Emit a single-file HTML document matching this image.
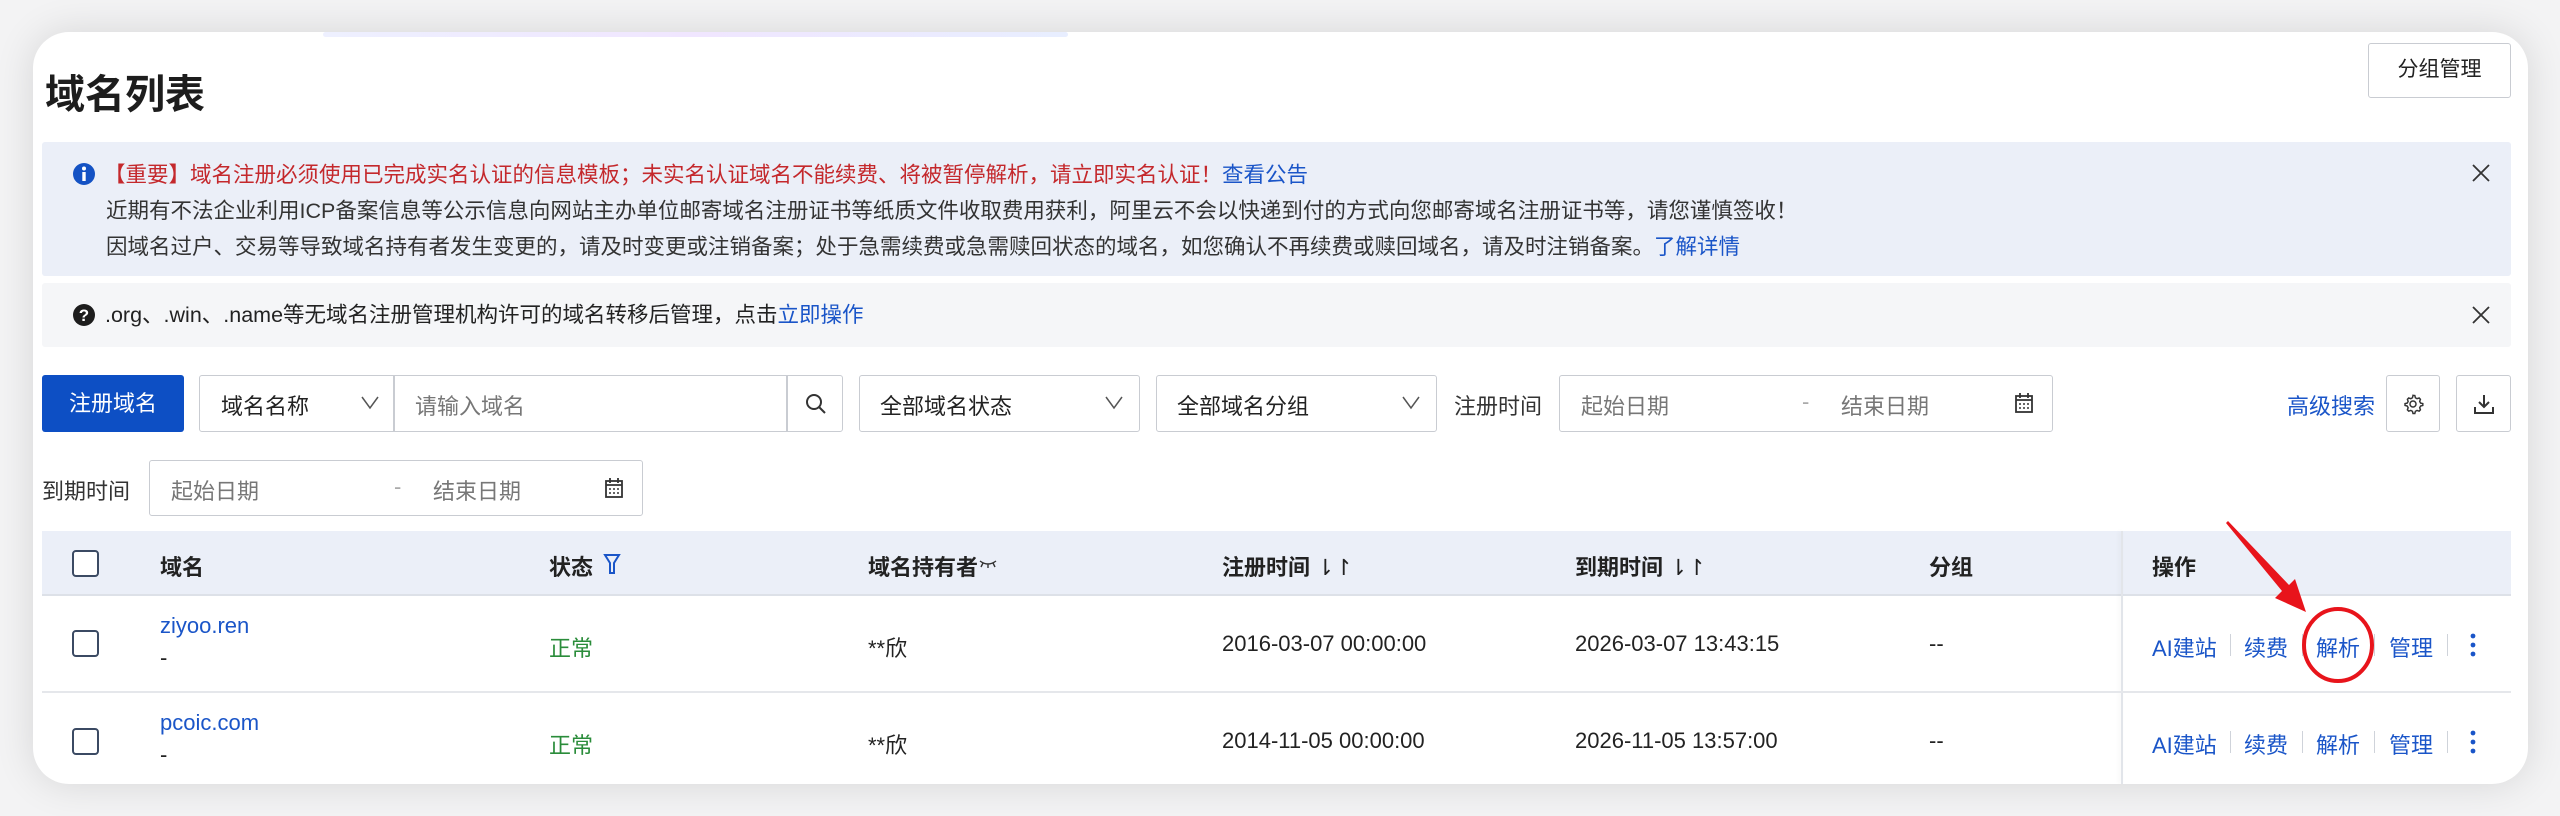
<!DOCTYPE html>
<html><head><meta charset="utf-8"><style>
*{margin:0;padding:0;box-sizing:border-box}
body{width:2560px;height:816px;background:#f3f3f4;position:relative;overflow:hidden;font-family:"Liberation Sans","Noto Sans CJK SC",sans-serif;color:#222;font-size:22px}
.a{position:absolute;white-space:nowrap}
.card{position:absolute;left:33px;top:32px;width:2495px;height:752px;background:#fff;border-radius:36px;box-shadow:0 0 40px rgba(0,0,0,.12);overflow:hidden}
.box{position:absolute;border:1.5px solid #c9ccd2;border-radius:3px;background:#fff}
.ph{color:#777}
.blue{color:#1a55c8}
.sep{position:absolute;width:1px;height:22px;background:#cfd3da}
.cb{position:absolute;width:27px;height:27px;border:2px solid #3b4a63;border-radius:4px;background:#fff}
</style></head><body>
<div class="card">
 <div class="a" style="left:290px;top:0;width:745px;height:5px;background:linear-gradient(90deg,#eef0ff,#f0e6ff,#e8eeff);border-radius:3px"></div>
 <div class="a" style="left:12px;top:30px;font-size:40px;font-weight:bold;color:#1d1d1d">域名列表</div>
 <div class="box" style="left:2335px;top:11px;width:143px;height:55px;text-align:center;line-height:52px;font-size:21px">分组管理</div>

 <div class="a" style="left:9px;top:110px;width:2469px;height:134px;background:#ebeff8;border-radius:3px"></div>
 <svg class="a" style="left:39px;top:130px" width="24" height="24" viewBox="0 0 24 24"><circle cx="12" cy="12" r="11" fill="#1452c4"/><rect x="10.3" y="10" width="3.4" height="9" fill="#fff"/><circle cx="12" cy="6.5" r="2" fill="#fff"/></svg>
 <div class="a" style="left:71px;top:128px;font-size:21.5px;line-height:30px;color:#c4282c">【重要】域名注册必须使用已完成实名认证的信息模板；未实名认证域名不能续费、将被暂停解析，请立即实名认证！<span class="blue">查看公告</span></div>
 <div class="a" style="left:73px;top:164px;font-size:21.5px;line-height:30px;color:#333">近期有不法企业利用ICP备案信息等公示信息向网站主办单位邮寄域名注册证书等纸质文件收取费用获利，阿里云不会以快递到付的方式向您邮寄域名注册证书等，请您谨慎签收！</div>
 <div class="a" style="left:73px;top:200px;font-size:21.5px;line-height:30px;color:#333">因域名过户、交易等导致域名持有者发生变更的，请及时变更或注销备案；处于急需续费或急需赎回状态的域名，如您确认不再续费或赎回域名，请及时注销备案。<span class="blue">了解详情</span></div>
 <svg class="a" style="left:2438px;top:131px" width="20" height="20" viewBox="0 0 20 20"><path d="M2 2l16 16M18 2L2 18" stroke="#333" stroke-width="1.8"/></svg>

 <div class="a" style="left:9px;top:251px;width:2469px;height:64px;background:#f5f6f8;border-radius:3px"></div>
 <svg class="a" style="left:39px;top:271px" width="24" height="24" viewBox="0 0 24 24"><circle cx="12" cy="12" r="11" fill="#1d1d1d"/><text x="12" y="18" font-size="17" font-weight="bold" fill="#fff" text-anchor="middle" font-family="Liberation Sans">?</text></svg>
 <div class="a" style="left:72px;top:268px;font-size:21.5px;line-height:30px;color:#222">.org、.win、.name等无域名注册管理机构许可的域名转移后管理，点击<span class="blue">立即操作</span></div>
 <svg class="a" style="left:2438px;top:273px" width="20" height="20" viewBox="0 0 20 20"><path d="M2 2l16 16M18 2L2 18" stroke="#333" stroke-width="1.8"/></svg>

 <!-- toolbar row1 -->
 <div class="a" style="left:9px;top:343px;width:142px;height:57px;background:#0d4fc4;border-radius:3px;color:#fff;text-align:center;line-height:57px;font-size:22px">注册域名</div>
 <div class="box" style="left:166px;top:343px;width:644px;height:57px"></div>
 <div class="a" style="left:360px;top:344px;width:1.5px;height:55px;background:#c9ccd2"></div>
 <div class="a" style="left:753px;top:344px;width:1.5px;height:55px;background:#c9ccd2"></div>
 <div class="a" style="left:188px;top:357px">域名名称</div>
 <svg class="a" style="left:327px;top:362px" width="20" height="18" viewBox="0 0 20 18"><path d="M2 3l8 11 8-11" fill="none" stroke="#555" stroke-width="1.5"/></svg>
 <div class="a ph" style="left:382px;top:357px">请输入域名</div>
 <svg class="a" style="left:771px;top:360px" width="24" height="24" viewBox="0 0 24 24"><circle cx="10" cy="10" r="7" fill="none" stroke="#333" stroke-width="2"/><path d="M15 15l6 6" stroke="#333" stroke-width="2"/></svg>
 <div class="box" style="left:826px;top:343px;width:281px;height:57px"></div>
 <div class="a" style="left:847px;top:357px">全部域名状态</div>
 <svg class="a" style="left:1071px;top:362px" width="20" height="18" viewBox="0 0 20 18"><path d="M2 3l8 11 8-11" fill="none" stroke="#555" stroke-width="1.5"/></svg>
 <div class="box" style="left:1123px;top:343px;width:281px;height:57px"></div>
 <div class="a" style="left:1144px;top:357px">全部域名分组</div>
 <svg class="a" style="left:1368px;top:362px" width="20" height="18" viewBox="0 0 20 18"><path d="M2 3l8 11 8-11" fill="none" stroke="#555" stroke-width="1.5"/></svg>
 <div class="a" style="left:1421px;top:357px;color:#333">注册时间</div>
 <div class="box" style="left:1526px;top:343px;width:494px;height:57px"></div>
 <div class="a ph" style="left:1548px;top:357px">起始日期</div>
 <div class="a ph" style="left:1769px;top:357px;color:#aaa">-</div>
 <div class="a ph" style="left:1808px;top:357px">结束日期</div>
 <svg class="a" style="left:1981px;top:360px" width="20" height="22" viewBox="0 0 20 22"><rect x="2" y="4" width="16" height="16" fill="none" stroke="#333" stroke-width="1.8"/><path d="M2 8h16M6 1v5M14 1v5" stroke="#333" stroke-width="1.8"/><path d="M5 12h2M9 12h2M13 12h2M5 16h2M9 16h2M13 16h2" stroke="#333" stroke-width="1.6"/></svg>
 <div class="a blue" style="left:2254px;top:357px">高级搜索</div>
 <div class="box" style="left:2353px;top:343px;width:54px;height:57px"></div>
 <svg class="a" style="left:2369px;top:361px" width="22" height="22" viewBox="0 0 24 24"><path d="M12 2.5l2 .3.6 2.4 1.8 1 2.3-.8 1.4 1.5-.8 2.3 1 1.8 2.4.6v2l-2.4.6-1 1.8.8 2.3-1.4 1.5-2.3-.8-1.8 1-.6 2.4h-2l-.6-2.4-1.8-1-2.3.8-1.4-1.5.8-2.3-1-1.8-2.4-.6v-2l2.4-.6 1-1.8-.8-2.3 1.4-1.5 2.3.8 1.8-1 .6-2.4z" fill="none" stroke="#333" stroke-width="1.6"/><circle cx="12" cy="12" r="3.3" fill="none" stroke="#333" stroke-width="1.6"/></svg>
 <div class="box" style="left:2423px;top:343px;width:55px;height:57px"></div>
 <svg class="a" style="left:2439px;top:360px" width="24" height="24" viewBox="0 0 24 24"><path d="M12 3v12M7 10l5 5 5-5M3 15v6h18v-6" fill="none" stroke="#333" stroke-width="2"/></svg>

 <!-- row2 -->
 <div class="a" style="left:9px;top:442px;color:#333">到期时间</div>
 <div class="box" style="left:116px;top:428px;width:494px;height:56px"></div>
 <div class="a ph" style="left:138px;top:442px">起始日期</div>
 <div class="a ph" style="left:361px;top:442px;color:#aaa">-</div>
 <div class="a ph" style="left:400px;top:442px">结束日期</div>
 <svg class="a" style="left:571px;top:445px" width="20" height="22" viewBox="0 0 20 22"><rect x="2" y="4" width="16" height="16" fill="none" stroke="#333" stroke-width="1.8"/><path d="M2 8h16M6 1v5M14 1v5" stroke="#333" stroke-width="1.8"/><path d="M5 12h2M9 12h2M13 12h2M5 16h2M9 16h2M13 16h2" stroke="#333" stroke-width="1.6"/></svg>

 <!-- table -->
 <div class="a" style="left:9px;top:499px;width:2469px;height:65px;background:#ebeff8;border-bottom:2px solid #dde1e8"></div>
 <div class="a" style="left:2088px;top:499px;width:2px;height:253px;background:#e2e5ea;box-shadow:-2px 0 4px rgba(0,0,0,.05)"></div>
 <div class="a" style="left:9px;top:659px;width:2469px;height:2px;background:#e5e7eb"></div>
 <div class="cb" style="left:39px;top:518px"></div>
 <div class="a" style="left:127px;top:518px;font-weight:bold">域名</div>
 <div class="a" style="left:516px;top:518px;font-weight:bold">状态</div>
 <svg class="a" style="left:570px;top:520px" width="18" height="24" viewBox="0 0 18 24"><path d="M2 3h14l-5 8v10h-4v-10z" fill="none" stroke="#1a55c8" stroke-width="2"/></svg>
 <div class="a" style="left:835px;top:518px;font-weight:bold">域名持有者</div>
 <svg class="a" style="left:946px;top:526px" width="18" height="12" viewBox="0 0 18 12"><path d="M1 3q8 6 16 0M4 5l-2 4M9 6v4M14 5l2 4" fill="none" stroke="#333" stroke-width="1.4"/></svg>
 <div class="a" style="left:1189px;top:518px;font-weight:bold">注册时间 <span style="font-weight:normal">⇂↾</span></div>
 <div class="a" style="left:1542px;top:518px;font-weight:bold">到期时间 <span style="font-weight:normal">⇂↾</span></div>
 <div class="a" style="left:1896px;top:518px;font-weight:bold">分组</div>
 <div class="a" style="left:2119px;top:518px;font-weight:bold">操作</div>

 <div class="cb" style="left:39px;top:598px"></div>
 <div class="a blue" style="left:127px;top:581px">ziyoo.ren</div>
 <div class="a" style="left:127px;top:613px">-</div>
 <div class="a" style="left:516px;top:599px;color:#2a8c3a">正常</div>
 <div class="a" style="left:835px;top:599px">**欣</div>
 <div class="a" style="left:1189px;top:599px">2016-03-07 00:00:00</div>
 <div class="a" style="left:1542px;top:599px">2026-03-07 13:43:15</div>
 <div class="a" style="left:1896px;top:599px">--</div>

 <div class="cb" style="left:39px;top:696px"></div>
 <div class="a blue" style="left:127px;top:678px">pcoic.com</div>
 <div class="a" style="left:127px;top:710px">-</div>
 <div class="a" style="left:516px;top:696px;color:#2a8c3a">正常</div>
 <div class="a" style="left:835px;top:696px">**欣</div>
 <div class="a" style="left:1189px;top:696px">2014-11-05 00:00:00</div>
 <div class="a" style="left:1542px;top:696px">2026-11-05 13:57:00</div>
 <div class="a" style="left:1896px;top:696px">--</div>

 <div class="a blue" style="left:2119px;top:599px">AI建站</div><div class="sep" style="left:2197px;top:602px"></div>
 <div class="a blue" style="left:2211px;top:599px">续费</div><div class="sep" style="left:2269px;top:602px"></div>
 <div class="a blue" style="left:2283px;top:599px">解析</div><div class="sep" style="left:2341px;top:602px"></div>
 <div class="a blue" style="left:2356px;top:599px">管理</div><div class="sep" style="left:2414px;top:602px"></div>
 <svg class="a" style="left:2436px;top:600px" width="8" height="26" viewBox="0 0 8 26"><circle cx="4" cy="4" r="2.4" fill="#1a55c8"/><circle cx="4" cy="13" r="2.4" fill="#1a55c8"/><circle cx="4" cy="22" r="2.4" fill="#1a55c8"/></svg>

 <div class="a blue" style="left:2119px;top:696px">AI建站</div><div class="sep" style="left:2197px;top:699px"></div>
 <div class="a blue" style="left:2211px;top:696px">续费</div><div class="sep" style="left:2269px;top:699px"></div>
 <div class="a blue" style="left:2283px;top:696px">解析</div><div class="sep" style="left:2341px;top:699px"></div>
 <div class="a blue" style="left:2356px;top:696px">管理</div><div class="sep" style="left:2414px;top:699px"></div>
 <svg class="a" style="left:2436px;top:697px" width="8" height="26" viewBox="0 0 8 26"><circle cx="4" cy="4" r="2.4" fill="#1a55c8"/><circle cx="4" cy="13" r="2.4" fill="#1a55c8"/><circle cx="4" cy="22" r="2.4" fill="#1a55c8"/></svg>

 <svg class="a" style="left:0;top:0" width="2495" height="752" viewBox="0 0 2495 752">
  <ellipse cx="2305" cy="613" rx="34" ry="36" fill="none" stroke="#e8141b" stroke-width="4"/>
  <polygon points="2193,491 2195,489 2256,553 2262,547 2273,580 2242,566 2249,559" fill="#e8141b"/>
 </svg>
</div>
</body></html>
